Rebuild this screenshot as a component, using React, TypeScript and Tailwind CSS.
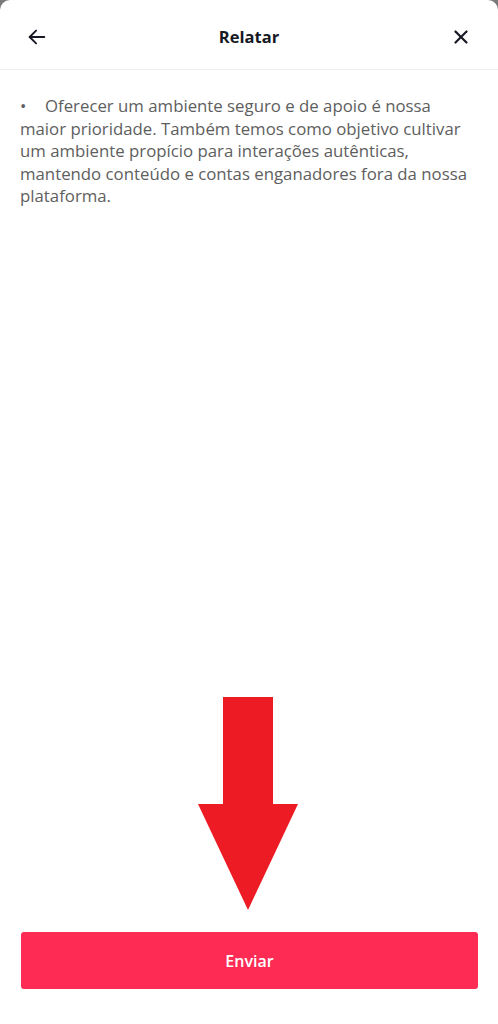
import React from "react";

export default function App() {
  return (
    <div className="w-[498px] h-[1024px] bg-[#7a7a7a] overflow-hidden" style={{ fontFamily: '"Open Sans", "Liberation Sans", sans-serif' }}>
      <div className="relative w-full h-full bg-white rounded-t-[10px] flex flex-col">
        <div className="h-[70px] flex items-center justify-between px-[26px] border-b border-[#efefef] pt-[5px]">
          <svg width="22" height="22" viewBox="0 0 24 24" fill="none" stroke="#161823" strokeWidth="2" strokeLinecap="round" strokeLinejoin="round">
            <path d="M20 12H4" />
            <path d="M11 5l-7 7 7 7" />
          </svg>
          <div className="text-[16.5px] font-bold text-[#161823]">Relatar</div>
          <svg width="22" height="22" viewBox="0 0 24 24" fill="none" stroke="#161823" strokeWidth="2.4" strokeLinecap="round">
            <path d="M6 6l12 12" />
            <path d="M18 6L6 18" />
          </svg>
        </div>
        <div className="px-[20px] pt-[25px] text-[16.8px] leading-[22.5px] text-[#5e5e5e]">
          <p>
            <span className="inline-block w-[25px]">•</span>
            Oferecer um ambiente seguro e de apoio é nossa maior prioridade. Também temos como objetivo cultivar um ambiente propício para interações autênticas, mantendo conteúdo e contas enganadores fora da nossa plataforma.
          </p>
        </div>
        <div className="flex-1" />
        <div className="px-[21px] pb-[35px]">
          <button className="w-[457px] h-[57px] rounded-[3px] bg-[#fe2c55] text-white text-[16px] font-semibold">Enviar</button>
        </div>
        <svg className="absolute left-[198px] top-[697px]" width="100" height="213" viewBox="0 0 100 213">
          <polygon points="25,0 75,0 75,107 100,107 50,213 0,107 25,107" fill="#ed1c24" />
        </svg>
      </div>
    </div>
  );
}
